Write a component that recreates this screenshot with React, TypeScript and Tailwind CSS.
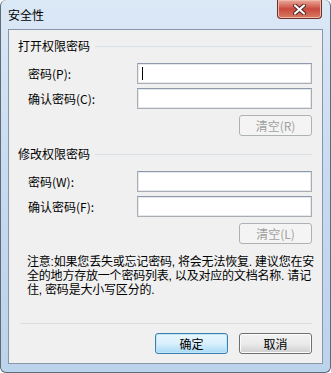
import { ReactNode } from "react";

const font = { fontFamily: '"Noto Sans CJK SC", "Liberation Sans", sans-serif' };

function Field({ label, caret }: { label: string; caret?: boolean }) {
  return (
    <div className="flex h-[21px] items-center">
      <span className="pl-[10px] text-[12px] leading-[14px] text-black">{label}</span>
      <div className="ml-auto flex h-[21px] w-[175px] items-center border border-[#abadb3] border-t-[#8e9aa9] bg-white pl-[4px] shadow-[inset_0_0_0_1px_#e3e9ef]">
        {caret && <div className="h-[13px] w-px bg-black" />}
      </div>
    </div>
  );
}

function Btn({ children, disabled, primary }: { children: ReactNode; disabled?: boolean; primary?: boolean }) {
  const cls = disabled
    ? "border-[#adb2b5] bg-[#f4f4f4] text-[#a0a0a0]"
    : primary
      ? "border-[#3c7fb1] bg-gradient-to-b from-[#eaf6fd] via-[#d9f0fc] to-[#a7d9f5] text-black shadow-[inset_0_0_0_1px_#c0e6fa]"
      : "border-[#707070] bg-gradient-to-b from-[#f2f2f2] via-[#ebebeb] to-[#cfcfcf] text-black shadow-[inset_0_0_0_1px_#fcfcfc]";
  return (
    <div className={`flex h-[21px] w-[73px] items-center justify-center rounded-[3px] border text-[12px] ${cls}`}>
      {children}
    </div>
  );
}

function Group({ title, first, second, clear }: { title: string; first: string; second: string; clear: string }) {
  return (
    <div className="flex flex-col">
      <div className="flex h-[16px] items-center">
        <span className="text-[12px] leading-[16px] text-black">{title}</span>
        <div className="ml-[5px] h-px flex-1 bg-[#d5dfe5]" />
      </div>
      <div className="mt-[9px]">
        <Field label={first} caret={title === "打开权限密码"} />
      </div>
      <div className="mt-[4px]">
        <Field label={second} />
      </div>
      <div className="mt-[6px] flex justify-end">
        <Btn disabled>{clear}</Btn>
      </div>
    </div>
  );
}

export default function App() {
  return (
    <div className="h-[373px] w-[331px] overflow-hidden bg-white" style={font}>
      <div className="flex h-[373px] w-[331px] flex-col rounded-t-[6px] rounded-b-[6px] border border-t-0 border-[#5f6b78] bg-gradient-to-b from-[#dbe8f6] via-[#c6daf0] to-[#bcd3ec]">
        {/* title bar */}
        <div className="flex h-[29px] items-start">
          <span className="mt-[7px] pl-[7px] text-[12px] leading-[16px] text-black">安全性</span>
          <div className="ml-auto mr-[8px] flex h-[19px] w-[45px] items-center justify-center rounded-b-[4px] border border-t-0 border-[#6d2f2a] bg-gradient-to-b from-[#e9a99b] via-[#c9483d] to-[#d67b64] shadow-[inset_0_0_0_1px_#f0b8a8]">
            <svg width="13" height="11" viewBox="0 0 13 11">
              <path d="M2 1.5 L11 9.5 M11 1.5 L2 9.5" stroke="#4a2420" strokeWidth="4" strokeLinecap="round" />
              <path d="M2 1.5 L11 9.5 M11 1.5 L2 9.5" stroke="#ffffff" strokeWidth="2.2" strokeLinecap="round" />
            </svg>
          </div>
        </div>

        {/* client area */}
        <div className="ml-[7px] flex h-[335px] w-[315px] flex-col border border-[#8796a8] bg-[#f0f0f0] pl-[9px] pr-[10px] pt-[8px] text-black">
          <Group title="打开权限密码" first="密码(P):" second="确认密码(C):" clear="清空(R)" />
          <div className="mt-[10px]">
            <Group title="修改权限密码" first="密码(W):" second="确认密码(F):" clear="清空(L)" />
          </div>

          <div className="mr-[-12px] mt-[11px] whitespace-nowrap pl-[9px] font-['Liberation_Sans','Noto_Sans_CJK_SC',sans-serif] text-[12px] leading-[14px] tracking-[-0.2px]">
            注意:如果您丢失或忘记密码, 将会无法恢复. 建议您在安
            <br />
            全的地方存放一个密码列表, 以及对应的文档名称. 请记
            <br />
            住, 密码是大小写区分的.
          </div>

          <div className="ml-[2px] mt-[26px] h-px bg-[#dcdcdc]" />

          <div className="mt-[9px] flex justify-end gap-[11px]">
            <Btn primary>确定</Btn>
            <Btn>取消</Btn>
          </div>
        </div>
      </div>
    </div>
  );
}
